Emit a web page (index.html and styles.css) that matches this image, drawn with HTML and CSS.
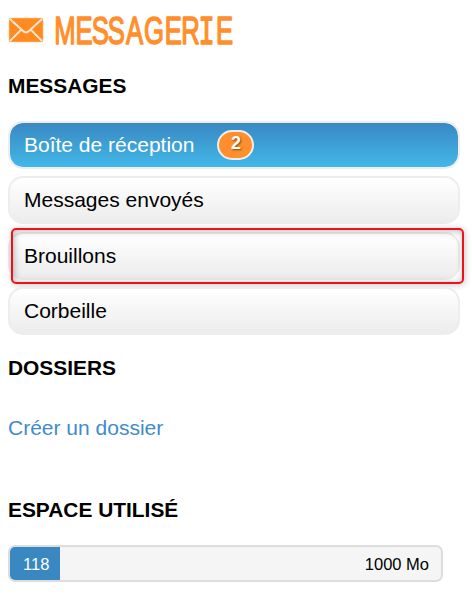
FILE: index.html
```html
<!DOCTYPE html>
<html lang="fr">
<head>
<meta charset="utf-8">
<title>Messagerie</title>
<link rel="stylesheet" href="styles.css">
</head>
<body>
<aside class="sidebar">
  <header class="brand">
    <svg class="envelope" width="36" height="26" viewBox="0 0 36 26">
      <rect x=".5" y=".5" width="35" height="25" rx="3" fill="#ffd9b5"/>
      <rect x="1.2" y="1.2" width="33.6" height="23.6" rx="1.5" fill="#ff8a22"/>
      <path d="M2 2 15 14Q18 16.8 21 14L34 2M2 24 13 12.8M34 24 23 12.8" fill="none" stroke="#ffe8d2" stroke-width="1.9"/>
    </svg>
    <svg class="wordmark" width="186" height="53" viewBox="50 0 186 53" role="heading" aria-level="1">
      <text class="wordmark-text" transform="scale(.65 1)" y="43.6" x="100 129.5 154.5 179 207 237 266.5 293 318 345.5">MESSAGER<tspan class="slab">I</tspan>E</text>
    </svg>
  </header>
  <h2 class="heading">MESSAGES</h2>
  <nav class="folders">
    <a class="folder active">Boîte de réception <span class="badge">2</span></a>
    <a class="folder">Messages envoyés</a>
    <a class="folder lower marked">Brouillons</a>
    <a class="folder lower">Corbeille</a>
  </nav>
  <h2 class="heading folders-heading">DOSSIERS</h2>
  <a class="create">Créer un dossier</a>
  <h2 class="heading">ESPACE UTILISÉ</h2>
  <div class="quota"><span class="used">118</span><span class="total">1000 Mo</span></div>
</aside>
</body>
</html>
```
FILE: styles.css
```css
* { box-sizing: border-box; }
body { margin: 0; background: #fff; color: #000; font: 21px/24px "Liberation Sans", Arial, sans-serif; }
.sidebar { width: 472px; padding: 0 12px 0 8px; }
.brand { display: flex; height: 53px; }
.envelope { margin: 17px 6px 0 0; flex: none; }
.wordmark { flex: none; overflow: visible; }
.wordmark-text { font: 39.5px "Liberation Sans", sans-serif; fill: #ff8f2c; stroke: #ff8f2c; stroke-width: 1.6; stroke-linejoin: round; text-anchor: middle; }
.slab { font-family: "Liberation Mono", monospace; font-size: 41.5px; }
.heading { margin: 21px 0 0; font-size: 20.9px; line-height: 24px; font-weight: bold; }
.folders { display: grid; grid-auto-rows: 48px; row-gap: 7.33px; margin-top: 23px; }
.folder { position: relative; display: flex; align-items: center; padding: 0 14px 1px; border: 2px solid #ededed; border-radius: 15px; background: linear-gradient(#fff, #ececec); }
.lower { padding-top: 1px; padding-bottom: 0; }
.active { color: #fff; background: linear-gradient(#3988c2, #42b8e8) padding-box; }
.badge { width: 37px; height: 30px; margin-left: 23px; border: 2px solid #eee; border-radius: 15px; background: #ff8f2c; font-size: 18px; line-height: 23px; font-weight: bold; text-align: center; text-shadow: 1px 1px 2px rgba(0,0,0,.5); }
.marked::after { content: ""; position: absolute; inset: -6px -6px -6px 1px; border: 2px solid #f01018; border-radius: 5px; box-shadow: 1px 1px 7px rgba(0,0,0,.22), inset 1px 1px 7px rgba(0,0,0,.28); }
.folders-heading { margin-top: 21px; }
.create { display: block; margin: 36px 0 58px; color: #428bca; }
.create + .heading { margin-top: 0; }
.quota { display: flex; justify-content: space-between; width: 435px; height: 37px; margin-top: 23px; border: 2px solid #ddd; border-radius: 7px; overflow: hidden; background: #f5f5f5; font-size: 16.5px; line-height: 35px; }
.used { width: 50px; padding-left: 13px; color: #fff; background: #3988c2; }
.total { padding-right: 12px; }
```
